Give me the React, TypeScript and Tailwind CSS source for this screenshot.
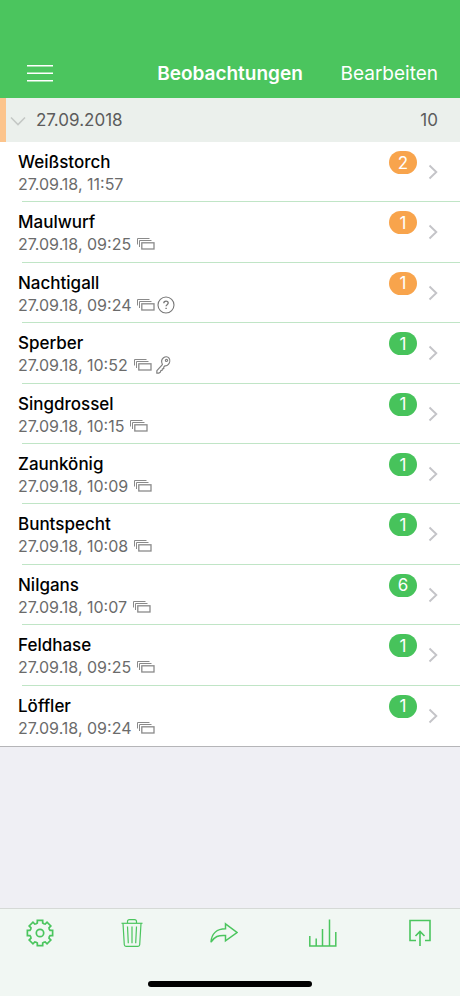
type Observation = {
  id: number;
  name: string;
  timestamp: string;
  count: number;
  pending?: boolean;
  photos?: boolean;
  extra?: 'question' | 'key';
};

const observations: Observation[] = [
  { id: 1, name: 'Weißstorch', timestamp: '27.09.18, 11:57', count: 2, pending: true },
  { id: 2, name: 'Maulwurf', timestamp: '27.09.18, 09:25', count: 1, pending: true, photos: true },
  { id: 3, name: 'Nachtigall', timestamp: '27.09.18, 09:24', count: 1, pending: true, photos: true, extra: 'question' },
  { id: 4, name: 'Sperber', timestamp: '27.09.18, 10:52', count: 1, photos: true, extra: 'key' },
  { id: 5, name: 'Singdrossel', timestamp: '27.09.18, 10:15', count: 1, photos: true },
  { id: 6, name: 'Zaunkönig', timestamp: '27.09.18, 10:09', count: 1, photos: true },
  { id: 7, name: 'Buntspecht', timestamp: '27.09.18, 10:08', count: 1, photos: true },
  { id: 8, name: 'Nilgans', timestamp: '27.09.18, 10:07', count: 6, photos: true },
  { id: 9, name: 'Feldhase', timestamp: '27.09.18, 09:25', count: 1, photos: true },
  { id: 10, name: 'Löffler', timestamp: '27.09.18, 09:24', count: 1, photos: true },
];

function PhotosIcon() {
  return (
    <svg width="18" height="12" viewBox="0 0 18 12" fill="none" stroke="#8a8a8a" strokeWidth="1">
      <path d="M.5 6.5V.5H12.5" />
      <path d="M2.5 9V2.5H14.5" />
      <rect x="4.8" y="4.8" width="12.2" height="6.2" strokeWidth="1.3" />
    </svg>
  );
}

function QuestionIcon() {
  return (
    <svg width="18" height="18" viewBox="0 0 18 18" fill="none" stroke="#777" strokeWidth="1.1">
      <circle cx="9" cy="9" r="8" />
      <path d="M6.8 7.3c0-1.4 1-2.2 2.2-2.2s2.2.8 2.2 2c0 1.6-2.1 1.7-2.1 3.2" strokeWidth="1.3" />
      <path d="M9.1 11.7V13.1" strokeWidth="1.4" />
    </svg>
  );
}

function KeyIcon() {
  return (
    <svg width="18" height="18" viewBox="0 0 18 18" fill="none" stroke="#808080" strokeWidth="1.2" strokeLinejoin="round">
      <path d="M6.4 8.6C5.2 6 5.6 3.2 7.5 1.8c1.8-1.3 4.3-1.1 5.5.4 1.2 1.6.9 4.5-.6 6.2-1 1.2-2.3 1.7-3.6 1.5l-1.1 1.3.1 1.4-1.4.2-.3 1.5-1.3.2-.3 1.5-1.5 1.1-2.2.1.1-2.5z" />
      <circle cx="10.5" cy="4.4" r="1.1" />
    </svg>
  );
}

function GearIcon() {
  const point = (radius: number, degrees: number) => {
    const a = (degrees * Math.PI) / 180;
    return `${(14 + radius * Math.cos(a)).toFixed(2)},${(14 + radius * Math.sin(a)).toFixed(2)}`;
  };
  const points = [0, 45, 90, 135, 180, 225, 270, 315]
    .flatMap((a) => [point(10.4, a - 15), point(12.9, a - 12), point(12.9, a + 12), point(10.4, a + 15), point(10, a + 22.5)])
    .join(' ');

  return (
    <svg width="28" height="28" viewBox="0 0 28 28" fill="none" stroke="currentColor" strokeWidth="1.7">
      <polygon points={points} />
      <circle cx="14" cy="14" r="3.7" />
    </svg>
  );
}

function TrashIcon() {
  return (
    <svg width="22" height="28" viewBox="0 0 22 28" fill="none" stroke="currentColor" strokeWidth="1.2" strokeLinejoin="round">
      <path d="M.5 4.3h21" />
      <path d="M6.5 4V2.5Q6.5.6 8.5.6h5q2 0 2 1.9V4" />
      <path d="M2 4.5l1.3 21.3q.1 1.6 1.7 1.6h12q1.6 0 1.7-1.6L20 4.5" />
      <path d="M6.5 7.5l.8 16.8M11 7.5v16.8M15.5 7.5l-.8 16.8" />
    </svg>
  );
}

function ShareIcon() {
  return (
    <svg width="28" height="22" viewBox="0 0 28 22" fill="none" stroke="currentColor" strokeWidth="1.5">
      <path d="M15.5 1.8L27 10.5l-11.5 8.3v-5.3C8.5 13 4.5 14.5 1 20.2 1.5 11.5 7 6.8 15.5 6.8z" />
    </svg>
  );
}

function ChartIcon() {
  return (
    <svg width="28" height="28" viewBox="0 0 28 28" fill="none" stroke="currentColor" strokeWidth="1.5">
      <path d="M.8 17v10h26V13M7.2 19.5V27M13.5 10v17M20.5.5V27" />
    </svg>
  );
}

function UploadIcon() {
  return (
    <svg width="22" height="28" viewBox="0 0 22 28" fill="none" stroke="currentColor" strokeWidth="1.6">
      <path d="M7 21.500H1V1.500h20v20h-5" />
      <path d="M11 27V12.500M6.500 17L11 12.500l4.500 4.500" />
    </svg>
  );
}

const tools = [
  { label: 'Einstellungen', icon: GearIcon },
  { label: 'Löschen', icon: TrashIcon },
  { label: 'Teilen', icon: ShareIcon },
  { label: 'Statistik', icon: ChartIcon },
  { label: 'Hochladen', icon: UploadIcon },
];

function ObservationRow({ item }: { item: Observation }) {
  return (
    <li className="group flex flex-1 flex-col">
      <a href={`#${item.id}`} className="flex flex-1 pl-[18px] pr-[22px]">
        <div className="flex-1 pt-2">
          <h2 className="text-[17px] font-medium leading-6 text-black">{item.name}</h2>
          <div className="flex h-5 items-center text-[16px] leading-5 text-[#6b6b6b]">
            <span className="mr-[6px]">{item.timestamp}</span>
            {item.photos && <PhotosIcon />}
            {item.extra === 'question' && <span className="ml-[2px]"><QuestionIcon /></span>}
            {item.extra === 'key' && <span className="ml-[4px]"><KeyIcon /></span>}
          </div>
        </div>
        <span className={`mt-[9px] flex h-[23px] w-7 items-center justify-center rounded-full text-[17px] leading-6 text-white ${item.pending ? 'bg-[#f8a44c]' : 'bg-[#47c35b]'}`}>
          {item.count}
        </span>
        <svg className="ml-[11px] mt-[22px]" width="10" height="16" viewBox="0 0 10 16" fill="none" stroke="#c4c4c8" strokeWidth="1.9">
          <path d="M1.5 1.5L8.3 8l-6.8 6.5" />
        </svg>
      </a>
      <div className="ml-[22px] h-px bg-[#c0e5c6] group-last:bg-transparent" />
    </li>
  );
}

export default function App() {
  return (
    <div className="flex min-h-screen flex-col bg-[#efeff4] font-[Inter,'Liberation_Sans',sans-serif]">
      <header className="grid grid-cols-[1fr_auto_1fr] items-center bg-[#4bc55e] px-[22px] pb-2 pt-[58px] text-white">
        <button className="flex h-8 w-9 items-center justify-center justify-self-start" aria-label="Menü">
          <svg width="28" height="18" viewBox="0 0 28 18" stroke="currentColor" strokeWidth="1.5">
            <path d="M1 .8h26M1 8.300h26M1 15.800h26" />
          </svg>
        </button>
        <h1 className="text-[19px] font-semibold leading-8">Beobachtungen</h1>
        <button className="justify-self-end text-[19px] leading-8">Bearbeiten</button>
      </header>

      <main className="flex-1">
        <button className="flex h-11 w-full items-center border-l-[6px] border-[#fcc48c] bg-[#ebf0ec] pl-1 pr-[22px] pt-[2px] text-[17px] text-[#5c5c5c]">
          <svg width="16" height="10" viewBox="0 0 16 10" fill="none" stroke="#c4c8c5" strokeWidth="1.6">
            <path d="M1 1.5L8 8.500l7-7" />
          </svg>
          <span className="ml-[10px]">27.09.2018</span>
          <span className="ml-auto">10</span>
        </button>

        <ul className="flex min-h-[605px] flex-col border-b border-[#b5b5b8] bg-white">
          {observations.map((item) => (
            <ObservationRow key={item.id} item={item} />
          ))}
        </ul>
      </main>

      <footer className="sticky bottom-0 border-t border-[#d5d9d6] bg-[#f1f7f3] text-[#4bc55e]">
        <nav className="grid grid-cols-[92fr_92fr_99fr_97fr_28px] px-[26px] pt-[10px]">
          {tools.map(({ label, icon: Icon }) => (
            <button key={label} aria-label={label} className="flex h-7 w-7 items-center justify-center">
              <Icon />
            </button>
          ))}
        </nav>
        <div className="mx-auto mb-[9px] mt-[34px] h-[6px] w-[164px] rounded-full bg-black" />
      </footer>
    </div>
  );
}
